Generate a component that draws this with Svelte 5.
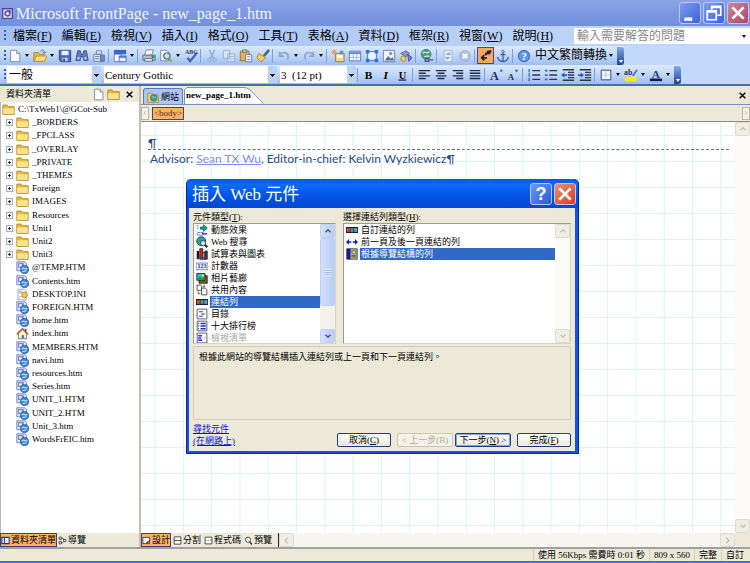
<script>
  const menus = [
    ['檔案', 'F'], ['編輯', 'E'], ['檢視', 'V'], ['插入', 'I'], ['格式', 'O'], ['工具', 'T'],
    ['表格', 'A'], ['資料', 'D'], ['框架', 'R'], ['視窗', 'W'], ['說明', 'H']
  ];
  const standard = [
    ['new', 1], ['folder', 1], ['save'], ['find'], ['publish'], ['|'], ['pane', 1], ['|'],
    ['print'], ['preview', 1], ['spell'], ['|'], ['cut'], ['copy'], ['paste'], ['brush'], ['|'],
    ['undo', 1], ['redo', 1], ['|'], ['component'], ['table'], ['layer'], ['picture'], ['shapes'], ['|'],
    ['link'], ['|'], ['refresh'], ['stop'], ['|'], ['marks'], ['anchor'], ['|'], ['help']
  ];
  const formatting = [
    ['|'], ['B'], ['I'], ['U'], ['|'], ['left'], ['center'], ['right'], ['justify'], ['|'],
    ['grow'], ['shrink'], ['|'], ['numbers'], ['bullets'], ['outdent'], ['indent'], ['|'],
    ['border', 1], ['highlight', 1], ['color', 1]
  ];
  const folders = ['_BORDERS', '_FPCLASS', '_OVERLAY', '_PRIVATE', '_THEMES', 'Foreign', 'IMAGES', 'Resources', 'Unit1', 'Unit2', 'Unit3'];
  const files = ['@TEMP.HTM', 'Contents.htm', 'DESKTOP.INI', 'FOREIGN.HTM', 'home.htm', 'index.htm', 'MEMBERS.HTM', 'navi.htm', 'resources.htm', 'Series.htm', 'UNIT_1.HTM', 'UNIT_2.HTM', 'Unit_3.htm', 'WordsFrEIC.htm'];
  const fileIcon = (f) => (f === 'DESKTOP.INI' ? 'ini' : f === 'index.htm' ? 'home' : 'page');
  const kinds = [
    ['effect', '動態效果'], ['search', 'Web 搜尋'], ['chart', '試算表與圖表'], ['counter', '計數器'], ['photos', '相片藝廊'],
    ['include', '共用內容'], ['linkbar', '連結列'], ['toc', '目錄'], ['top10', '十大排行榜'], ['listview', '檢視清單']
  ];
  const bars = [['linkbar', '自訂連結的列'], ['arrows', '前一頁及後一頁連結的列'], ['nav', '根據導覽結構的列']];
  let kind = $state(6);
  let bar = $state(2);
</script>

{#snippet icon(name)}
  <svg class="icon" viewBox="0 0 16 16" aria-hidden="true">
    {#if name === 'new'}
      <path d="M3 1.500h7l3.500 3.500v9.500h-10.500z" fill="#fff" stroke="#6c7fa8" /><path d="M10 1.500v3.500h3.500" fill="#cfdcf5" stroke="#6c7fa8" />
    {:else if name === 'folder'}
      <path d="M1 14v-11.500h5.500l1.500 2h7v9.500z" fill="#e9b840" stroke="#a98325" /><path d="M1.500 6.500h13v7h-13z" fill="#fbe38e" />
    {:else if name === 'open'}
      <path d="M1 14v-10h5l1 2h6v8z" fill="#e9b840" stroke="#a98325" /><path d="M1 14l3-6h12l-3 6z" fill="#fbdf80" stroke="#b98a28" /><path d="M8 3c2-3 5-2 5 1M11 3l2 2 2-2" fill="none" stroke="#3c62b8" />
    {:else if name === 'save'}
      <path d="M1.500 1.500h13v13h-11l-2-2z" fill="#4d6bc6" stroke="#283f8c" /><path d="M4 2h8v5h-8z" fill="#eef3ff" /><path d="M5 10h6v4h-6z" fill="#c6d2ee" /><path d="M6 11h2v3h-2z" fill="#283f8c" />
    {:else if name === 'find'}
      <path d="M3 2h3l1 4h2l1-4h3l2 11h-5v-4h-4v4h-5z" fill="#5f7fbc" stroke="#354e8c" /><path d="M3 9h2v3h-2zM11 9h2v3h-2z" fill="#c8dbf8" />
    {:else if name === 'publish'}
      <path d="M2 6h8v8h-8zM5 2h6v4h-6z" fill="#dbe6fa" stroke="#6a7ea8" /><path d="M10 7h4v7h-4z" fill="#7690c8" stroke="#4c639b" /><path d="M3.500 8.500h5M3.500 11h5" stroke="#6a7ea8" />
    {:else if name === 'pane'}
      <path d="M1 1h14v5h-14z" fill="#3768c6" /><path d="M1.500 6h8v8.500h-8z" fill="#f9fbff" stroke="#5b7ec4" /><path d="M7 8h8v6.500h-8z" fill="#e8eefb" stroke="#4a6db8" /><path d="M7 8h8v2h-8z" fill="#4a79d2" />
    {:else if name === 'print'}
      <path d="M5 1h8l-2 6h-8z" fill="#fff" stroke="#6b778e" /><path d="M1 7h14v6h-14z" fill="#b2bccd" stroke="#5f6b84" /><path d="M3 11h9v3h-9z" fill="#e7edf6" stroke="#5f6b84" /><path d="M11 6l4 3-4 3z" fill="#3c9a45" />
    {:else if name === 'preview'}
      <path d="M2 1.500h7l2 2v10h-9z" fill="#fff" stroke="#697da8" /><circle cx="9" cy="8" r="3.500" fill="#c6e6e2" stroke="#3d7f83" stroke-width="1.500" /><path d="M11.500 10.500l3 4" stroke="#b58b32" stroke-width="2" />
    {:else if name === 'spell'}
      <path d="M4 10l3 4 8-10" fill="none" stroke="#3b66c0" stroke-width="2.500" /><text x="1" y="6" font-size="7" font-weight="bold" fill="#33415f">ABC</text>
    {:else if name === 'cut'}
      <path d="M5 1l5 10M11 1l-5 10" stroke="#94a7cc" stroke-width="1.500" /><circle cx="5" cy="12.500" r="2" fill="none" stroke="#94a7cc" /><circle cx="11" cy="12.500" r="2" fill="none" stroke="#94a7cc" />
    {:else if name === 'copy'}
      <path d="M1.500 1.500h7v9h-7zM6.500 5.500h8v9h-8z" fill="#d9e5f9" stroke="#93a8d0" /><path d="M8 8.500h5M8 11.500h5" stroke="#93a8d0" />
    {:else if name === 'paste'}
      <path d="M1.500 2.500h10v11h-10z" fill="#e6b347" stroke="#93702b" /><path d="M4 1h5v3h-5z" fill="#b9c2d3" stroke="#66718a" /><path d="M7.500 6.500h7v8h-7z" fill="#fff" stroke="#5b74ac" /><path d="M9 9h4M9 12h4" stroke="#5b74ac" />
    {:else if name === 'brush'}
      <path d="M15 1l-6 7" stroke="#4f5d8a" stroke-width="3" /><path d="M3 5l8 5-5 5-5-5z" fill="#f4cf5e" stroke="#a78430" />
    {:else if name === 'undo'}
      <path d="M3 3v5h5M3 8c3-7 12-4 9 4" fill="none" stroke="#8fa5d4" stroke-width="2" />
    {:else if name === 'redo'}
      <path d="M13 3v5h-5M13 8c-3-7-12-4-9 4" fill="none" stroke="#8fa5d4" stroke-width="2" />
    {:else if name === 'component'}
      <path d="M5 5h10v9.500h-10z" fill="#f0d58c" stroke="#937638" /><path d="M7 7h6v3h-6z" fill="#fff" /><path d="M10 2h4v4h-4z" fill="#6a87c9" /><path d="M3.500 0v7M0 3.500h7M1 1l5 5M6 1l-5 5" stroke="#e49a28" />
    {:else if name === 'table'}
      <path d="M1.500 2.500h13v11h-13z" fill="#fff" stroke="#4a6bb3" /><path d="M2 3h12v3h-12z" fill="#6c91dc" /><path d="M2 9.500h12M6 6v7M10 6v7" stroke="#8fabd9" />
    {:else if name === 'layer'}
      <path d="M3 3h10v10h-10z" fill="#e9f2ff" stroke="#3c74d6" /><path d="M1 1h4v4h-4zM11 1h4v4h-4zM1 11h4v4h-4zM11 11h4v4h-4z" fill="#2e70e0" />
    {:else if name === 'picture'}
      <path d="M1.500 1.500h13v13h-13z" fill="#eef3fc" stroke="#66789f" /><path d="M3 13l4-5 3 3 2-2 2 4z" fill="#5c6e92" /><circle cx="10" cy="5" r="2" fill="#8896b2" />
    {:else if name === 'shapes'}
      <path d="M2 5l6-3 4 3-4 4z" fill="#8991d8" stroke="#5d63ac" /><circle cx="5" cy="11" r="3" fill="#f0cc59" stroke="#a18336" /><path d="M10 6l5 4-4 4z" fill="#6d7ed2" stroke="#474f9e" />
    {:else if name === 'link'}
      <circle cx="7" cy="6" r="5.500" fill="#4ca06b" stroke="#33748c" /><path d="M3 5c3-4 5 2 8-2M5 9c2-2 4 0 6-1" stroke="#bfe3f0" fill="none" stroke-width="1.500" /><path d="M6 11h4v3h-4zM10 12.500h5" fill="none" stroke="#48597d" stroke-width="1.500" />
    {:else if name === 'refresh'}
      <path d="M3.500 1.500h9v13h-9z" fill="#e3ebf9" stroke="#a2b3d3" /><path d="M6 6h4l-1-2M10 10h-4l1 2" fill="none" stroke="#90a4cc" stroke-width="1.500" />
    {:else if name === 'stop'}
      <circle cx="8" cy="8" r="6" fill="#b4c4e2" stroke="#93a6cc" /><path d="M5.500 5.500l5 5M10.500 5.500l-5 5" stroke="#fff" stroke-width="2" />
    {:else if name === 'marks'}
      <path d="M14 2l-4 1v3M7 5h6M10 4l-3 3M9 3l5 0M3 10h6M6 7l-3 3 3 3" fill="none" stroke="#17204a" stroke-width="2" />
    {:else if name === 'anchor'}
      <circle cx="8" cy="3" r="1.500" fill="none" stroke="#3d5fae" /><path d="M8 4v10M5 6.500h6M2 9c1 7 11 7 12 0" fill="none" stroke="#3d5fae" stroke-width="1.500" />
    {:else if name === 'help'}
      <circle cx="8" cy="8" r="6.500" fill="#5c98e6" stroke="#2d5caa" /><text x="5" y="12" font-size="12" font-weight="bold" fill="#fff">?</text>
    {:else if name === 'B'}
      <text x="3" y="13" font-size="13" font-weight="bold">B</text>
    {:else if name === 'I'}
      <text x="5" y="13" font-size="13" font-weight="bold" font-style="italic">I</text>
    {:else if name === 'U'}
      <text x="3" y="12" font-size="12" font-weight="bold" text-decoration="underline">U</text>
    {:else if name === 'left'}
      <path d="M2 3h13M2 6h8M2 9h13M2 12h8" stroke="#222c4c" stroke-width="1.500" />
    {:else if name === 'center'}
      <path d="M2 3h12M4 6h8M2 9h12M4 12h8" stroke="#222c4c" stroke-width="1.500" />
    {:else if name === 'right'}
      <path d="M2 3h12M6 6h8M2 9h12M6 12h8" stroke="#222c4c" stroke-width="1.500" />
    {:else if name === 'justify'}
      <path d="M2 3h12M2 6h12M2 9h12M2 12h12" stroke="#222c4c" stroke-width="1.500" />
    {:else if name === 'grow'}
      <text x="1" y="14" font-size="14" font-weight="bold" fill="#27345c">A</text><path d="M12 4h4l-2-3z" fill="#2f5dc0" />
    {:else if name === 'shrink'}
      <text x="2" y="14" font-size="10" font-weight="bold" fill="#27345c">A</text><path d="M10 2h4l-2 3z" fill="#2f5dc0" />
    {:else if name === 'numbers'}
      <path d="M6 3h9M6 8h9M6 13h9" stroke="#2c3656" stroke-width="1.500" /><path d="M2.500 1v4M2.500 6v4M2.500 11v4" stroke="#3a67c4" stroke-width="1.500" />
    {:else if name === 'bullets'}
      <path d="M6 3h9M6 8h9M6 13h9" stroke="#2c3656" stroke-width="1.500" /><path d="M1 2h3v2h-3zM1 7h3v2h-3zM1 12h3v2h-3z" fill="#3a67c4" />
    {:else if name === 'outdent'}
      <path d="M2 2h13M8 5h7M8 8h7M8 11h7M2 14h13" stroke="#2c3656" stroke-width="1.500" /><path d="M0 8l4-3v2h3v2h-3v2z" fill="#2f5dc0" />
    {:else if name === 'indent'}
      <path d="M2 2h13M8 5h7M8 8h7M8 11h7M2 14h13" stroke="#2c3656" stroke-width="1.500" /><path d="M7 8l-4-3v2h-3v2h3v2z" fill="#2f5dc0" />
    {:else if name === 'border'}
      <path d="M2.500 2.500h11v11h-11z" fill="#eef4ff" stroke="#2e3c64" /><path d="M8 4v8M4 8h8" stroke="#8a98bb" stroke-dasharray="1 1" />
    {:else if name === 'highlight'}
      <text x="0" y="8" font-size="9" font-weight="bold" fill="#27345c">ab</text><path d="M15 2l-5 7" stroke="#5674b8" stroke-width="2" /><path d="M1 10h13v5h-13z" fill="#ffee00" />
    {:else if name === 'color'}
      <text x="3" y="11" font-size="13" font-weight="bold" fill="#27408c">A</text><path d="M1 12h14v3h-14z" fill="#16204d" />
    {:else if name === 'page'}
      <path d="M1 1h10l2 2v9h-12z" fill="#dfe6fb" stroke="#5473bd" /><path d="M2.500 2.500h7v6h-7z" fill="#7e80d0" /><path d="M4 4h3v3h-3z" fill="#fff" /><circle cx="10.500" cy="10.500" r="5" fill="#3c82d6" stroke="#2e5ba6" /><path d="M7 10c3-4 4 2 7-1M8 13l5-1" stroke="#b8e4f4" fill="none" stroke-width="1.500" />
    {:else if name === 'ini'}
      <path d="M2.500 1.500h8l2 2v11h-10z" fill="#fff" stroke="#8f93a0" /><circle cx="10.500" cy="8.500" r="3.500" fill="#f2c94a" stroke="#a6822a" /><path d="M4 4h4M4 6h3M4 11h3" stroke="#5d84c9" />
    {:else if name === 'home'}
      <path d="M3 8v6.500h10v-6.500l-5-5z" fill="#f7efd9" stroke="#7b6a4d" /><path d="M1 9l7-7 7 7" fill="none" stroke="#a0713c" stroke-width="2" /><path d="M7 10h3v4h-3z" fill="#4b76b8" /><path d="M11 2h2v4h-2z" fill="#8a4a34" />
    {:else if name === 'site'}
      <path d="M1 3h6l1 2h7v10h-14z" fill="#f0cf6a" stroke="#a98325" /><circle cx="9" cy="9" r="4.500" fill="#3fa27c" stroke="#2f6fa8" /><path d="M6 9c2-3 4 1 6-1" stroke="#bfe4ff" fill="none" />
    {:else if name === 'effect'}
      <path d="M1 2h2M2 4h2M1 6h2" stroke="#1a9a80" /><path d="M6 4h4v-3l5 4.500-5 4.500v-3h-4z" fill="#18a08c" stroke="#0c5a55" /><ellipse cx="6" cy="13" rx="5" ry="2" fill="none" stroke="#3a44c8" /><path d="M8 13h7" stroke="#3a44c8" stroke-width="2" />
    {:else if name === 'search'}
      <circle cx="7" cy="7" r="6" fill="#2c9fb0" stroke="#112244" /><path d="M3 6c3-4 4 3 8-1M3 10c3-2 4 0 6-1" stroke="#2bb25e" stroke-width="2.500" fill="none" /><circle cx="9.500" cy="9.500" r="3.500" fill="#bfeef9" stroke="#112244" /><path d="M12 12l3 3" stroke="#112244" stroke-width="2.500" />
    {:else if name === 'chart'}
      <path d="M1 4h3v11h-3z" fill="#111" /><path d="M5 1h4v14h-4z" fill="#d02828" stroke="#111" /><path d="M9 6h3v9h-3z" fill="#f0d020" stroke="#111" /><path d="M12 4h3v11h-3z" fill="#2838c0" stroke="#111" /><path d="M1 13h13" stroke="#2838c0" stroke-width="2" />
    {:else if name === 'counter'}
      <path d="M0 4h16v9h-16z" fill="#e7e9ff" stroke="#5a62c8" /><text x="2" y="11" font-size="8" font-weight="bold" fill="#2430b0">123</text>
    {:else if name === 'photos'}
      <path d="M4 5h11v10h-11z" fill="#6a6420" stroke="#111" /><path d="M1 2h11v9h-11z" fill="#28b8c8" stroke="#111" /><path d="M2 10l3-4 3 3 2-2 2 3z" fill="#2a8c38" /><circle cx="9" cy="4.500" r="1.500" fill="#ffe640" />
    {:else if name === 'include'}
      <path d="M1.500 1.500h5l1 2v5h-6z" fill="#fff" stroke="#222" /><path d="M7.500 5.500h5l2 2v7h-7z" fill="#fff" stroke="#222" /><path d="M3 10v3h3M11 1v3h-2" fill="none" stroke="#222" />
    {:else if name === 'linkbar'}
      <path d="M0 4h16v8h-16z" fill="#1c1c3c" /><path d="M1 5.500h4v5h-4z" fill="#e04848" /><path d="M6 5.500h4v5h-4z" fill="#3fb050" /><path d="M11 5.500h4v5h-4z" fill="#6c98f0" />
    {:else if name === 'toc'}
      <path d="M1.500 1.500h13v13h-13z" fill="#fff" stroke="#333" /><path d="M4 5h5M7 8h5M4 11h5" stroke="#2230c8" stroke-width="1.500" />
    {:else if name === 'top10'}
      <path d="M1.500 1.500h13v13h-13z" fill="#fff" stroke="#333" /><path d="M6 4.500h7M6 8h7M6 11.500h7M3 4.500h1M3 8h1M3 11.500h1" stroke="#2230c8" stroke-width="2" />
    {:else if name === 'listview'}
      <path d="M1.500 1.500h13v13h-13z" fill="#fff" stroke="#333" /><path d="M3 5h5M3 8h4M3 11h5" stroke="#2230c8" stroke-width="2" /><path d="M10 8h3" stroke="#999" />
    {:else if name === 'arrows'}
      <path d="M0 8l4-4v3h3v2h-3v3zM16 8l-4-4v3h-3v2h3v3z" fill="#1420c0" />
    {:else if name === 'nav'}
      <path d="M1 1h14v14h-14z" fill="#b8b078" stroke="#333" /><path d="M1 1h5v14h-5z" fill="#161c90" /><path d="M8 4h5v3h-5zM8 10h2v2h-2zM11 10h2v2h-2z" fill="#fff" stroke="#444" />
    {:else if name === 'dfolders'}
      <path d="M1.500 2.500h13v11h-13z" fill="#fff" stroke="#21309c" stroke-width="2" /><path d="M6 2v12" stroke="#21309c" stroke-width="2" />
    {:else if name === 'dnav'}
      <path d="M2 2h4v4h-4zM2 10h4v4h-4zM10 6h4v4h-4zM6 4h3l2 3M6 12h3" fill="#fff" stroke="#333" stroke-width="1.500" />
    {:else if name === 'design'}
      <path d="M1.500 2.500h12v11h-12z" fill="#fff" stroke="#333" stroke-width="1.500" /><path d="M14 8l-5 6-1-3z" fill="#555" stroke="#333" />
    {:else if name === 'split'}
      <path d="M2 1.500h12v13h-12zM2 8h12" fill="#fff" stroke="#333" stroke-width="1.500" />
    {:else if name === 'code'}
      <path d="M2 2h12v12h-12z" fill="#fff" stroke="#333" stroke-width="1.500" /><path d="M5 8h1M8 8h1M11 8h1" stroke="#333" stroke-width="2" />
    {:else if name === 'lens'}
      <circle cx="7" cy="6.500" r="4.500" fill="#fff" stroke="#333" stroke-width="1.500" /><path d="M10 10l4 5" stroke="#333" stroke-width="2.500" />
    {:else if name === 'up'}
      <path d="M3 10.500l5-5 5 5" fill="none" stroke="currentColor" stroke-width="3" />
    {:else if name === 'down'}
      <path d="M3 5.500l5 5 5-5" fill="none" stroke="currentColor" stroke-width="3" />
    {:else if name === 'prev'}
      <path d="M10.500 3l-5 5 5 5" fill="none" stroke="currentColor" stroke-width="2" />
    {:else if name === 'next'}
      <path d="M5.500 3l5 5-5 5" fill="none" stroke="currentColor" stroke-width="2" />
    {:else if name === 'close'}
      <path d="M3 3l10 10M13 3l-10 10" stroke="currentColor" stroke-width="2.500" />
    {:else if name === 'min'}
      <path d="M3 13.500h7" stroke="#fff" stroke-width="3" />
    {:else if name === 'restore'}
      <path d="M6 5v-3h8v8h-3M6 3h8M2 6h8v8h-8zM2 7h8" fill="none" stroke="#fff" stroke-width="1.500" />
    {:else if name === 'app'}
      <path d="M1 1h14v14h-14z" fill="#f3f0fb" stroke="#4c4796" stroke-width="2" /><circle cx="8" cy="8" r="3.500" fill="none" stroke="#6b54a8" stroke-width="2.500" /><path d="M9 4l4-1-1 4z" fill="#33307c" />
    {/if}
  </svg>
{/snippet}

{#snippet tools(items)}
  {#each items as [name, split]}
    {#if name === '|'}
      <span class="sep"></span>
    {:else}
      <button class="tool" class:on={name === 'marks'} aria-label={name}>{@render icon(name === 'folder' ? 'open' : name)}</button>
      {#if split}<button class="drop" aria-label="{name} options"></button>{/if}
    {/if}
  {/each}
{/snippet}

<div class="window">
  <header class="title">
    {@render icon('app')}
    <h1>Microsoft FrontPage - new_page_1.htm</h1>
    <button class="cap" aria-label="Minimize">{@render icon('min')}</button>
    <button class="cap" aria-label="Restore">{@render icon('restore')}</button>
    <button class="cap red" aria-label="Close">{@render icon('close')}</button>
  </header>

  <nav class="menu">
    <span class="grip"></span>
    {#each menus as [label, key]}
      <button>{label}(<u>{key}</u>)</button>
    {/each}
    <div class="ask"><input aria-label="Help" placeholder="輸入需要解答的問題" /><button class="drop" aria-label="Recent questions"></button></div>
  </nav>

  <div class="bar">
    <span class="grip"></span>
    {@render tools(standard)}
    <button class="convert">中文繁簡轉換</button><button class="drop" aria-label="轉換"></button>
    <button class="end" aria-label="More"></button>
  </div>
  <div class="bar">
    <span class="grip"></span>
    <select class="style" aria-label="Style"><option>一般</option></select>
    <select class="font" aria-label="Font"><option>Century Gothic</option></select>
    <select class="size" aria-label="Size"><option>3&nbsp; (12 pt)</option></select>
    {@render tools(formatting)}
    <button class="end" aria-label="More"></button>
  </div>

  <main>
    <aside>
      <div class="head">
        <h2>資料夾清單</h2>
        <button aria-label="New page">{@render icon('new')}</button>
        <button aria-label="New folder">{@render icon('folder')}</button>
        <button class="x" aria-label="Close list">{@render icon('close')}</button>
      </div>
      <div class="scroll">
        <ul class="tree">
          <li class="root">{@render icon('folder')}C:\TxWeb1\@GCot-Sub</li>
          {#each folders as f}
            <li><button class="plus" aria-label="Expand {f}"></button>{@render icon('folder')}{f}</li>
          {/each}
          {#each files as f}
            <li class="file">{@render icon(fileIcon(f))}{f}</li>
          {/each}
        </ul>
      </div>
      <div class="views">
        <button class="on">{@render icon('dfolders')}資料夾清單</button>
        <button>{@render icon('dnav')}導覽</button>
      </div>
    </aside>

    <section class="editor">
      <div class="tabs">
        <button class="site">{@render icon('site')}網站</button>
        <button class="current"><svg viewBox="0 0 80 17" preserveAspectRatio="none" aria-hidden="true"><path d="M0.500 17V3L3 0.500H60C68 1 71 10 79.500 16.500" fill="#fff" stroke="#7b8fb4" /></svg><span>new_page_1.htm</span></button>
        <button class="x" aria-label="Close page">{@render icon('close')}</button>
      </div>
      <div class="tags">
        <button class="arrow" aria-label="Previous tag">{@render icon('prev')}</button>
        <button class="tag">&lt;body&gt;</button>
        <button class="arrow last" aria-label="Next tag">{@render icon('next')}</button>
      </div>
      <div class="work">
        <div class="canvas">
          <p class="empty">¶</p>
          <p>Advisor: <a href="#advisor">Sean TX Wu</a>, Editor-in-chief: Kelvin Wyzkiewicz¶</p>
        </div>
        <div class="vbar">
          <button aria-label="Scroll up">{@render icon('up')}</button>
          <button aria-label="Scroll down">{@render icon('down')}</button>
        </div>
      </div>
      <div class="views">
        <button class="on">{@render icon('design')}設計</button>
        <button>{@render icon('split')}分割</button>
        <button>{@render icon('code')}程式碼</button>
        <button>{@render icon('lens')}預覽</button>
        <div class="hbar">
          <button aria-label="Scroll left">{@render icon('prev')}</button>
          <button aria-label="Scroll right">{@render icon('next')}</button>
        </div>
      </div>
    </section>
  </main>

  <footer>
    <span>使用 56Kbps 需費時 0:01 秒</span><span>809 x 560</span><span>完整</span><span>自訂</span>
  </footer>
</div>

<div class="dialog" role="dialog" aria-labelledby="dlg">
  <div class="dtitle">
    <h2 id="dlg">插入 Web 元件</h2>
    <button class="cap help" aria-label="Help">?</button>
    <button class="cap red" aria-label="Close">{@render icon('close')}</button>
  </div>
  <div class="dbody">
    <div class="lists">
      <div class="kinds">
        <h3 id="l1">元件類型(<u>T</u>):</h3>
        <div class="box">
          <div class="options" role="listbox" aria-labelledby="l1">
            {#each kinds as [ico, label], i}
              <button role="option" aria-selected={kind === i} class:picked={kind === i} disabled={i === 9} onclick={() => (kind = i)}>{@render icon(ico)}<span>{label}</span></button>
            {/each}
          </div>
          <div class="vbar live">
            <button aria-label="Scroll up">{@render icon('up')}</button>
            <span class="thumb"></span>
            <button aria-label="Scroll down">{@render icon('down')}</button>
          </div>
        </div>
      </div>
      <div class="bars">
        <h3 id="l2">選擇連結列類型(<u>H</u>):</h3>
        <div class="box">
          <div class="options" role="listbox" aria-labelledby="l2">
            {#each bars as [ico, label], i}
              <button role="option" aria-selected={bar === i} class:picked={bar === i} onclick={() => (bar = i)}>{@render icon(ico)}<span>{label}</span></button>
            {/each}
          </div>
          <div class="vbar">
            <button aria-label="Scroll up">{@render icon('up')}</button>
            <button aria-label="Scroll down">{@render icon('down')}</button>
          </div>
        </div>
      </div>
    </div>
    <p class="about">根據此網站的導覽結構插入連結列或上一頁和下一頁連結列。</p>
    <div class="actions">
      <a href="#web">尋找元件<br />(在網路上)</a>
      <button>取消(<u>C</u>)</button>
      <div class="pair">
        <button disabled>&lt; 上一步(B)</button>
        <button class="default">下一步(<u>N</u>) &gt;</button>
      </div>
      <button>完成(<u>F</u>)</button>
    </div>
  </div>
</div>

<style>
  :global(body) { background: #ece9d8; }
  .window, .dialog { font-family: 'Liberation Serif', 'Noto Sans CJK TC', serif; font-size: 9px; color: #000; }
  .window { height: 100vh; display: flex; flex-direction: column; overflow: hidden; border-bottom: 2px solid #3a76d8; box-sizing: border-box; }
  button, input, select { font: inherit; color: inherit; margin: 0; padding: 0; border: 0; background: none; white-space: nowrap; }
  h1, h2, h3, p, ul { margin: 0; padding: 0; font-weight: normal; list-style: none; }
  .icon { width: 14px; height: 14px; flex: none; display: block; }

  .title { height: 26px; flex: none; display: flex; align-items: center; gap: 2px; padding: 0 1px 0 2px; background: linear-gradient(#8ba4e6, #7a96df 60%, #7390dc); color: #fff; }
  .title h1 { flex: 1; font-size: 16px; line-height: 24px; padding: 2px 0 0 1px; color: #eef2ff; }
  .title .icon { width: 11px; height: 11px; }
  .cap, .title .cap { width: 22px; height: 22px; display: grid; place-items: center; border: 1px solid #b9c9f4; border-radius: 3px; background: linear-gradient(135deg, #7d9df0, #3a62d8); color: #fff; box-sizing: border-box; }
  .cap .icon, .title .cap .icon { width: 18px; height: 18px; }
  .title .cap.red { background: linear-gradient(135deg, #c58aa0, #b04660); }

  .menu { height: 20px; flex: none; display: flex; align-items: center; background: linear-gradient(90deg, #a3c0f5, #c3d9fb); font-size: 12px; padding-left: 4px; gap: 10px; }
  .menu > button { line-height: 18px; }
  .menu .grip { margin-right: -4px; }
  .grip { width: 3px; height: 12px; flex: none; background: repeating-linear-gradient(#3e5fa8 0 2px, transparent 2px 4px) 0 0 / 2px 100% no-repeat; }
  .ask { flex: 1; display: flex; height: 16px; background: #fff; padding-right: 2px; min-width: 0; }
  .ask input { flex: 1; min-width: 0; font-size: 12px; padding-left: 3px; outline: 0; }
  .ask input::placeholder { color: #8a8a8a; opacity: 1; }
  .menu .ask { margin-left: 11px; }
  .bar { height: 19px; flex: none; display: flex; align-items: center; padding-left: 4px; background: linear-gradient(#dce9fd, #c0d7fa 50%, #9dbdf0); }
  .bar::after { content: ''; flex: 1; height: 100%; background: #c3d9fb; }
  .bar .grip { margin-right: -1px; }
  .tool { width: 17px; height: 17px; flex: none; display: grid; place-items: center; }
  .tool.on { background: #f9a75c; box-shadow: inset 0 0 0 1px #3c4c8c; }
  .drop { width: 8px; height: 16px; flex: none; display: grid; place-items: center; }
  .drop::after { content: ''; border: 2px solid transparent; border-top: 3px solid #111; border-bottom: 0; }
  .sep { width: 1px; height: 14px; flex: none; background: #7f9fdb; margin: 0 2px 0 1px; }
  .convert { font-size: 12px; padding-left: 3px; line-height: 17px; }
  .end { width: 7px; height: 18px; background: linear-gradient(#86a8e8, #1d429c); margin-left: 2px; flex: none; border-radius: 0 3px 3px 0; display: grid; place-items: end center; }
  .end::after { content: ''; border: 2px solid transparent; border-top: 3px solid #fff; border-bottom: 0; margin-bottom: 2px; }
  select { appearance: none; height: 17px; flex: none; font-size: 11px; background: linear-gradient(#222, #222) right 2px top 8px / 5px 1px no-repeat, linear-gradient(#222, #222) right 3px top 9px / 3px 1px no-repeat, linear-gradient(#222, #222) right 4px top 10px / 1px 1px no-repeat, linear-gradient(90deg, #fff calc(100% - 9px), #bcd3f8 calc(100% - 9px)); padding-left: 1px; margin-left: 3px; }
  .style { width: 94px; margin-left: 1px; padding-left: 2px; font-size: 12px; }
  .font { width: 173px; }
  .size { width: 76px; }

  main { flex: 1; min-height: 0; display: flex; border-top: 2px solid #4a6ca8; border-bottom: 2px solid #a0a0a0; }
  aside { width: 141px; flex: none; display: flex; flex-direction: column; border-right: 2px solid #c4c0b0; background: #fff; box-sizing: border-box; }
  .head { height: 16px; display: flex; align-items: center; gap: 2px; background: #ece9d8; padding: 0 2px 0 6px; }
  .head h2 { flex: 1; font-size: 9px; line-height: 15px; }
  .head .icon { width: 13px; height: 13px; }
  .head .x .icon, .x .icon { width: 9px; height: 9px; margin: 0 3px; }
  .scroll { flex: 1; min-height: 0; overflow: hidden; border-left: 1px solid #b8b8b8; }
  .tree { height: 343px; display: grid; grid-auto-rows: 1fr; padding-top: 1px; }
  .tree li { display: flex; align-items: center; gap: 2px; padding-left: 5px; white-space: nowrap; line-height: 13px; }
  .tree .icon { width: 13px; height: 13px; margin-right: 1px; }
  .tree .root { padding-left: 1px; }
  .tree .file { padding-left: 15px; }
  .plus { width: 7px; height: 7px; box-sizing: border-box; border: 1px solid #9db0c8; background: linear-gradient(#333, #333) center / 3px 1px no-repeat, linear-gradient(#333, #333) center / 1px 3px no-repeat, #f4f4f0; margin-right: 1px; }
  .views { height: 14px; flex: none; display: flex; background: #ece9d8; }
  .views button { display: flex; align-items: center; gap: 1px; padding: 0 1px; line-height: 13px; }
  .views .icon { width: 9px; height: 9px; }
  .views .on { background: #fbb16a; box-shadow: inset 0 0 0 1px #4a3c6c; }
  .editor .views { gap: 1px; }

  .editor { flex: 1; min-width: 0; display: flex; flex-direction: column; background: #ece9d8; }
  .tabs { height: 18px; flex: none; display: flex; align-items: flex-end; border-bottom: 1px solid #7b8fb4; padding-left: 2px; }
  .site { display: flex; align-items: center; gap: 2px; height: 16px; width: 40px; padding-left: 3px; background: #abc6f5; border: 1px solid #5a78b8; border-bottom: 0; border-radius: 3px 3px 0 0; box-sizing: border-box; margin-right: 1px; }
  .site .icon { width: 12px; height: 12px; }
  .current { display: grid; width: 80px; height: 17px; font-weight: bold; text-align: left; }
  .current > * { grid-area: 1 / 1; }
  .current svg { width: 80px; height: 17px; }
  .current span { padding-left: 2px; line-height: 17px; }
  .tabs .x { margin-left: auto; align-self: center; }
  .tags { height: 16px; flex: none; display: flex; align-items: center; border-bottom: 1px solid #8f8c80; gap: 3px; }
  .tag { background: #fbb16a; border: 1px solid #4c4574; height: 13px; line-height: 10px; padding: 0 1px; color: #5b2a14; }
  .arrow { width: 8px; height: 13px; display: grid; place-items: center; background: #f4f2e8; border: 1px solid #b8b5a4; box-sizing: border-box; color: #aaa; }
  .arrow .icon { width: 6px; height: 8px; }
  .last { margin-left: auto; }
  .work { flex: 1; min-height: 0; display: flex; }
  .canvas { flex: 1; min-width: 0; padding: 15px 6px 0 7px; font: 12px / 17px Lato, 'Noto Sans CJK TC', sans-serif; color: #2b4a86; background: linear-gradient(90deg, transparent 14px, #dbf4f8 14px, #dbf4f8 15px, transparent 15px) 0 0 / calc(100% / 21) 100%, linear-gradient(transparent 13px, #dbf4f8 13px, #dbf4f8 14px, transparent 14px) 0 0 / 100% 26px, #fff; }
  .canvas p { padding-left: 2px; }
  .canvas .empty { line-height: 12px; border-bottom: 1px dashed #60719c; padding: 0; }
  .canvas a { color: #7e8fe8; }
  .vbar { width: 15px; flex: none; display: flex; flex-direction: column; justify-content: space-between; background: #fbfaf6; color: #c8c5b8; }
  .vbar button, .hbar button { width: 15px; height: 14px; display: grid; place-items: center; background: #f0eee4; border: 1px solid #dedbcd; border-radius: 2px; box-sizing: border-box; padding: 0; }
  .vbar .icon { width: 8px; height: 8px; }
  .live { background: #f2f1ec; color: #3d5a94; }
  .live button, .thumb { background: linear-gradient(90deg, #d3e0fd, #b9cdf8); border: 1px solid #c0d0f5; }
  .thumb { height: 66px; border-radius: 2px; margin-bottom: auto; display: grid; place-items: center; }
  .thumb::after { content: ''; width: 6px; height: 7px; background: repeating-linear-gradient(#eef3ff 0 1px, #9db4e8 1px 2px); }
  .hbar { flex: 1; display: flex; justify-content: space-between; background: #f7f5ef; border-left: 1px solid #222; margin: 0 15px 0 4px; color: #bbb; }

  footer { height: 12px; flex: none; display: flex; justify-content: flex-end; align-items: center; background: #ece9d8; padding-right: 2px; }
  footer span { line-height: 12px; padding: 0 4px; border-left: 1px solid #d0cdbd; white-space: nowrap; }

  .dialog { position: absolute; left: 186px; top: 179px; width: 393px; box-sizing: border-box; background: #1a50dc; border: 1px solid #0a2a9c; border-top: 0; border-radius: 5px 5px 0 0; padding: 0 3px 2px 2px; }
  .dtitle { height: 29px; display: flex; align-items: center; gap: 2px; background: linear-gradient(#0a58e0, #0a6af8 20%, #0553e4 60%, #0448d0); margin: 0 -3px 0 -2px; padding: 0 2px; border-radius: 5px 5px 0 0; }
  .dtitle h2 { flex: 1; font-size: 17px; line-height: 28px; color: #fff; padding: 3px 0 0 3px; }
  .dtitle .red { background: linear-gradient(135deg, #f09078, #d0401c); }
  .dtitle .help { font: bold 18px / 20px 'Liberation Sans', sans-serif; background: linear-gradient(135deg, #6c9cf8, #2458d8); }
  .dbody { background: #ece9d8; padding: 3px 4px 4px; }
  .lists { display: flex; gap: 7px; }
  .kinds { width: 143px; }
  .bars { flex: 1; }
  h3 { font-size: 9px; line-height: 12px; }
  .box { display: flex; height: 121px; box-sizing: border-box; background: #fff; border: 1px solid #9c9a8c; border-right-color: #d8d5c8; border-bottom-color: #d8d5c8; }
  .options { flex: 1; display: grid; grid-auto-rows: 12px; padding-left: 2px; overflow: hidden; }
  .options button { display: flex; align-items: center; gap: 2px; text-align: left; line-height: 12px; }
  .options .icon { width: 12px; height: 12px; }
  .options span { flex: 1; padding-left: 1px; }
  .options .picked span { background: #316ac5; color: #fff; }
  .options button:disabled { color: #aaa899; }
  .about { height: 74px; box-sizing: border-box; border: 1px solid #d0cdbd; border-radius: 2px; margin-top: 2px; padding: 4px 5px; line-height: 12px; }
  .actions { display: flex; align-items: flex-end; gap: 6px; margin-top: 3px; }
  .actions a { color: #1010e0; line-height: 12px; flex: 1; }
  .actions button { height: 14px; width: 54px; box-sizing: border-box; border: 1px solid #23407c; border-radius: 2px; background: linear-gradient(#fff, #ece9dc); line-height: 12px; }
  .pair { display: flex; gap: 2px; }
  .pair button { width: 56px; }
  .actions button:disabled { border-color: #cbc8b8; background: #f3f1e8; color: #b0ad9f; }
  .actions .default { box-shadow: inset 0 0 0 1px #7ea4e8; }
</style>
